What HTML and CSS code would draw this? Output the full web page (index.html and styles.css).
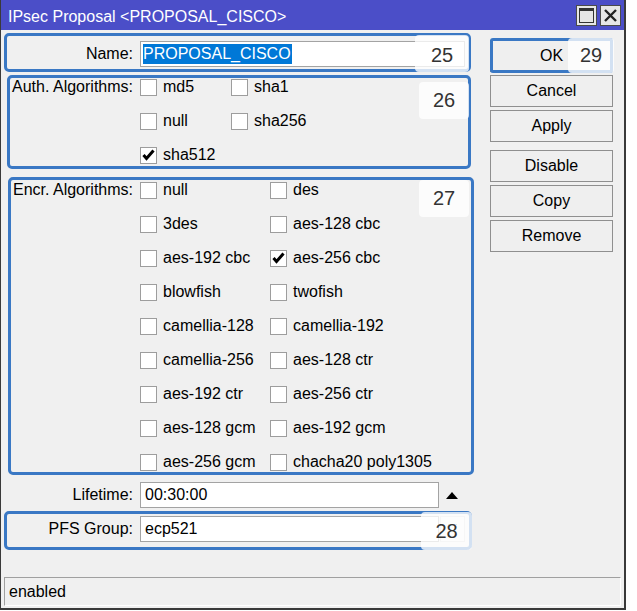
FILE: index.html
```html
<!DOCTYPE html>
<html>
<head>
<meta charset="utf-8">
<link rel="stylesheet" href="styles.css">
</head>
<body>
<div class="window">
  <div class="titlebar">
    <span class="title">IPsec Proposal &lt;PROPOSAL_CISCO&gt;</span>
    <div class="tb-btns">
      <span class="tb-btn"><span class="max-icon"></span></span>
      <span class="tb-btn"><svg width="13" height="13" viewBox="0 0 13 13"><path d="M1 1 L12 12 M12 1 L1 12" stroke="#222" stroke-width="2.4" fill="none"/></svg></span>
    </div>
  </div>
  <div class="main">
    <div class="form">
      <div class="row name-row">
        <span class="lbl">Name:</span>
        <div class="input name-input"><span class="sel">PROPOSAL_CISCO</span></div>
      </div>
      <div class="row group auth">
        <span class="lbl">Auth. Algorithms:</span>
        <div class="grid auth-grid">
          <div class="item"><span class="cb"></span>md5</div>
          <div class="item"><span class="cb"></span>sha1</div>
          <div class="item"><span class="cb"></span>null</div>
          <div class="item"><span class="cb"></span>sha256</div>
          <div class="item"><span class="cb"><svg width="15" height="15" viewBox="0 0 15 15"><polyline points="2.5,7 5.5,10.5 12.5,2.5" stroke="#000" stroke-width="3" fill="none" stroke-linejoin="miter"/></svg></span>sha512</div>
        </div>
      </div>
      <div class="row group encr">
        <span class="lbl">Encr. Algorithms:</span>
        <div class="grid encr-grid">
          <div class="item"><span class="cb"></span>null</div>
          <div class="item"><span class="cb"></span>des</div>
          <div class="item"><span class="cb"></span>3des</div>
          <div class="item"><span class="cb"></span>aes-128 cbc</div>
          <div class="item"><span class="cb"></span>aes-192 cbc</div>
          <div class="item"><span class="cb"><svg width="15" height="15" viewBox="0 0 15 15"><polyline points="2.5,7 5.5,10.5 12.5,2.5" stroke="#000" stroke-width="3" fill="none" stroke-linejoin="miter"/></svg></span>aes-256 cbc</div>
          <div class="item"><span class="cb"></span>blowfish</div>
          <div class="item"><span class="cb"></span>twofish</div>
          <div class="item"><span class="cb"></span>camellia-128</div>
          <div class="item"><span class="cb"></span>camellia-192</div>
          <div class="item"><span class="cb"></span>camellia-256</div>
          <div class="item"><span class="cb"></span>aes-128 ctr</div>
          <div class="item"><span class="cb"></span>aes-192 ctr</div>
          <div class="item"><span class="cb"></span>aes-256 ctr</div>
          <div class="item"><span class="cb"></span>aes-128 gcm</div>
          <div class="item"><span class="cb"></span>aes-192 gcm</div>
          <div class="item"><span class="cb"></span>aes-256 gcm</div>
          <div class="item"><span class="cb"></span>chacha20 poly1305</div>
        </div>
      </div>
      <div class="row life-row">
        <span class="lbl">Lifetime:</span>
        <div class="input short-input"><span class="val">00:30:00</span></div>
        <span class="up-arrow"></span>
      </div>
      <div class="row pfs-row">
        <span class="lbl">PFS Group:</span>
        <div class="input short-input"><span class="val">ecp521</span></div>
        <span class="dd-btn"><span class="dd-line"></span></span>
      </div>
    </div>
    <div class="buttons">
      <button class="btn">OK</button>
      <button class="btn">Cancel</button>
      <button class="btn">Apply</button>
      <button class="btn sep">Disable</button>
      <button class="btn">Copy</button>
      <button class="btn">Remove</button>
    </div>
  </div>
  <div class="status">enabled</div>

  <div class="hl hl-name"></div>
  <div class="hl hl-auth"></div>
  <div class="hl hl-encr"></div>
  <div class="hl hl-pfs"></div>
  <div class="hl hl-ok"></div>
  <div class="badge b25">25</div>
  <div class="badge b26">26</div>
  <div class="badge b27">27</div>
  <div class="badge b28">28</div>
  <div class="badge b29">29</div>
</div>
</body>
</html>
```
FILE: styles.css
```css
* { box-sizing: border-box; }
html, body { margin: 0; padding: 0; background: #ffffff; }
body {
  font-family: "Liberation Sans", Arial, sans-serif;
  font-size: 16px;
  color: #000;
}
.window {
  position: relative;
  width: 626px;
  height: 610px;
  background: #f0f0f0;
  border-left: 1px solid #3a3a3a;
  border-right: 2px solid #3a3a3a;
  border-bottom: 2px solid #3a3a3a;
  display: flex;
  flex-direction: column;
}
.titlebar {
  height: 30px;
  flex: none;
  background: #4b4ec8;
  display: flex;
  align-items: center;
  justify-content: space-between;
  padding-left: 7px;
  padding-right: 3px;
}
.title {
  color: #ffffff;
  font-size: 16px;
  padding-top: 3px;
}
.tb-btns { display: flex; gap: 3px; padding-top: 1px; }
.tb-btn {
  width: 21px;
  height: 21px;
  background: #e6e6e6;
  border: 1px solid #4a4a4a;
  display: flex;
  align-items: center;
  justify-content: center;
}
.max-icon {
  width: 15px;
  height: 15px;
  border: 1px solid #333;
  border-top: 3px solid #333;
  background: #e6e6e6;
}
.main {
  flex: 1;
  display: flex;
}
.form {
  width: 489px;
  flex: none;
}
.row {
  display: flex;
  align-items: center;
}
.lbl {
  width: 132px;
  flex: none;
  text-align: right;
  margin-right: 7px;
}
.name-row { margin-top: 11px; height: 26px; }
.input {
  height: 26px;
  background: #fff;
  border: 1px solid #a3a3a3;
  display: flex;
  align-items: center;
  padding-left: 2px;
}
.name-input { width: 325px; }
.sel {
  background: #0078d7;
  color: #fff;
  height: 20px;
  line-height: 20px;
  padding-right: 1px;
}
.short-input { width: 299px; }
.val { padding-left: 2px; }
.group { align-items: flex-start; }
.group .lbl { line-height: 34px; }
.auth { margin-top: 3px; }
.encr { margin-top: 1px; }
.grid { display: grid; grid-auto-rows: 34px; }
.auth-grid { grid-template-columns: 91px 140px; }
.encr-grid { grid-template-columns: 130px 180px; }
.item {
  display: flex;
  align-items: center;
  gap: 6px;
  white-space: nowrap;
}
.cb {
  width: 17px;
  height: 17px;
  flex: none;
  background: #fff;
  border: 1px solid #9d9d9d;
  display: flex;
  align-items: center;
  justify-content: center;
}
.life-row { margin-top: 3px; height: 26px; }
.up-arrow {
  margin-left: 7px;
  width: 0;
  height: 0;
  border-left: 6px solid transparent;
  border-right: 6px solid transparent;
  border-bottom: 7px solid #000;
}
.pfs-row { margin-top: 8px; height: 26px; }
.dd-btn {
  width: 25px;
  height: 26px;
  margin-left: 1px;
  border: 1px solid #d4d4d4;
  background: #f4f4f4;
  display: flex;
  justify-content: center;
  padding-top: 7px;
}
.dd-line { width: 9px; height: 1px; background: #888; }
.buttons {
  width: 123px;
  margin-left: 0px;
  padding-top: 10px;
  display: flex;
  flex-direction: column;
  gap: 3px;
}
.btn {
  height: 32px;
  width: 123px;
  background: #efefef;
  border: 1px solid #8f8f8f;
  font-family: "Liberation Sans", Arial, sans-serif;
  font-size: 16px;
  color: #000;
  padding: 0;
}
.btn.sep { margin-top: 5px; }
.status {
  height: 29px;
  flex: none;
  margin: 0 3px 2px 3px;
  border-top: 1px solid #a0a0a0;
  border-left: 1px solid #a0a0a0;
  border-right: 1px solid #ffffff;
  border-bottom: 1px solid #ffffff;
  padding-left: 4px;
  line-height: 27px;
}
.hl {
  position: absolute;
  border: 3px solid #3a78c4;
  border-radius: 5px;
}
.hl-name { left: 3px; top: 33px; width: 467px; height: 39px; }
.hl-auth { left: 6px; top: 75px; width: 464px; height: 94px; }
.hl-encr { left: 7px; top: 177px; width: 466px; height: 298px; }
.hl-pfs { left: 3px; top: 511px; width: 468px; height: 39px; }
.hl-ok { left: 489px; top: 38px; width: 123px; height: 35px; border-radius: 3px; }
.badge {
  position: absolute;
  background: rgba(255, 255, 255, 0.78);
  border-radius: 4px;
  color: #333;
  font-size: 20px;
  display: flex;
  align-items: center;
  justify-content: center;
}
.b25 { left: 414px; top: 35px; width: 54px; height: 37px; padding-top: 3px; }
.b26 { left: 418px; top: 82px; width: 50px; height: 37px; }
.b27 { left: 418px; top: 180px; width: 50px; height: 37px; }
.b28 { left: 420px; top: 512px; width: 51px; height: 38px; }
.b29 { left: 567px; top: 38px; width: 46px; height: 35px; }
```
